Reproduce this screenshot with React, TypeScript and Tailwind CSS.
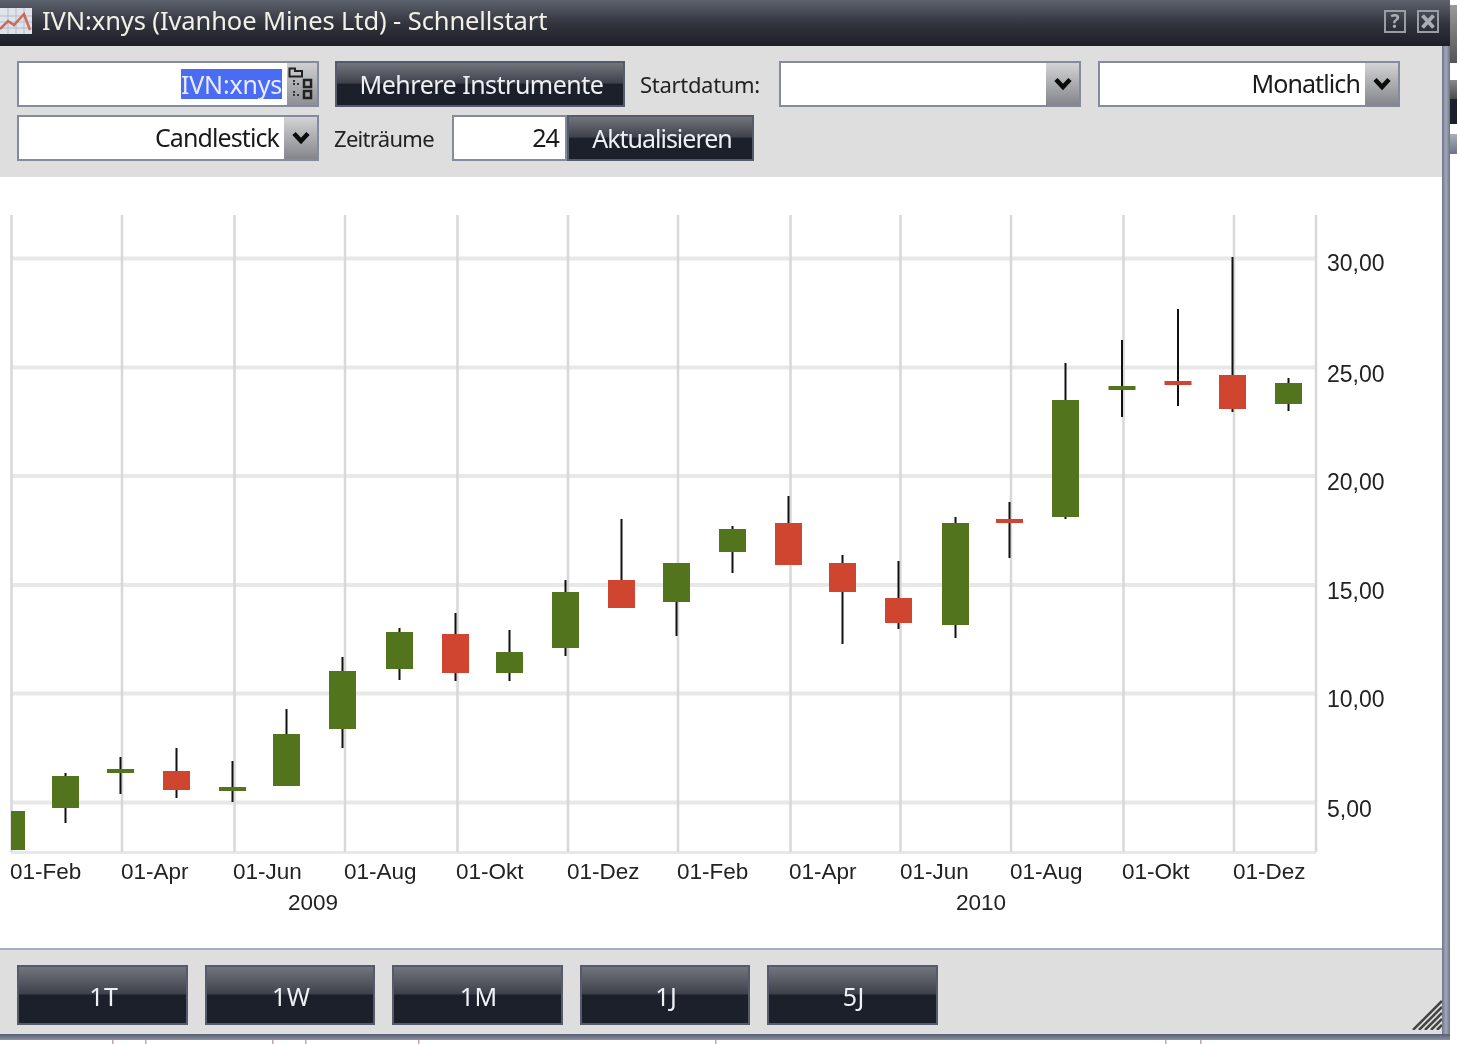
import React from 'react';

const GREEN = '#51741c';
const RED = '#cf4530';

// x, wick top, wick bottom, body top, body bottom, colour
const candles: [number, number, number, number, number, string][] = [
  [65.5, 773, 823, 776, 808, GREEN],
  [120.5, 757, 794, 769, 773, GREEN],
  [176.5, 748, 798, 771, 790, RED],
  [232.5, 761, 802, 787, 791, GREEN],
  [286.5, 709, 786, 734, 786, GREEN],
  [342.5, 657, 748, 671, 729, GREEN],
  [399.5, 628, 680, 632, 669, GREEN],
  [455.5, 613, 681, 634, 673, RED],
  [509.5, 630, 681, 652, 673, GREEN],
  [565.5, 580, 656, 592, 648, GREEN],
  [621.5, 519, 580, 580, 608, RED],
  [676.5, 563, 636, 563, 602, GREEN],
  [732.5, 526, 573, 529, 552, GREEN],
  [788.5, 496, 565, 523, 565, RED],
  [842.5, 555, 644, 563, 592, RED],
  [898.5, 561, 629, 598, 623, RED],
  [955.5, 517, 638, 523, 625, GREEN],
  [1009.5, 502, 558, 519, 523, RED],
  [1065.5, 363, 519, 400, 517, GREEN],
  [1122, 340, 417, 386, 390, GREEN],
  [1178, 309, 406, 381, 385, RED],
  [1232.5, 257, 412, 375, 409, RED],
  [1288.5, 378, 411, 383, 404, GREEN],
];

const gridX = [11.5, 122, 234.5, 345, 457.5, 568, 678, 790.5, 900.5, 1011, 1123.5, 1234, 1316];
const gridY = [258.5, 367.5, 476, 585, 693.5, 802.5];
const priceLabels: [string, number][] = [
  ['30,00', 263],
  ['25,00', 374],
  ['20,00', 482],
  ['15,00', 591],
  ['10,00', 699],
  ['5,00', 809],
];
const dateLabels: [string, number][] = [
  ['01-Feb', 10],
  ['01-Apr', 121],
  ['01-Jun', 233],
  ['01-Aug', 344],
  ['01-Okt', 456],
  ['01-Dez', 567],
  ['01-Feb', 677],
  ['01-Apr', 789],
  ['01-Jun', 900],
  ['01-Aug', 1010],
  ['01-Okt', 1122],
  ['01-Dez', 1233],
];
const bottomTicks = [112, 145, 272, 305, 418, 715, 1165, 1200];

const Chevron = () => (
  <svg width="20" height="16" viewBox="0 0 20 16" fill="none">
    <path d="M3 3.5 L10 11 L17 3.5" stroke="#0b0b0b" strokeWidth="4.5" />
  </svg>
);

const DropButton = () => (
  <div className="w-[33px] h-full flex items-center justify-center bg-gradient-to-b from-[#d4d4d6] to-[#84868c]">
    <Chevron />
  </div>
);

const Field = ({ width, pad, text, selected, children }: { width: string; pad: string; text?: string; selected?: boolean; children?: React.ReactNode }) => (
  <div className={`${width} h-[46px] flex border-2 border-[#848b9c] bg-white`}>
    <div className={`${pad} flex-1 flex items-center justify-end text-[25px] text-[#1a1a1a] tracking-[-0.9px] overflow-hidden`}>
      {selected ? <span className="bg-[#4a6cf2] text-[#e8ecff] leading-[30px] tracking-[-0.2px]">{text}</span> : text}
    </div>
    {children}
  </div>
);

const DarkButton = ({ label, className }: { label: string; className: string }) => (
  <button className={`${className} flex items-center justify-center border-2 border-[#555b6b] text-[#eef0f4] bg-[linear-gradient(#73757d_0%,#3e414b_48%,#1c202b_50%,#1c202b_100%)]`}>
    {label}
  </button>
);

const PeriodButton = ({ label }: { label: string }) => (
  <DarkButton label={label} className="w-[170.5px] h-[60px] pt-[4px] pl-[3px] text-[25px] tracking-[0.5px]" />
);

const Chart = () => (
  <svg width="1442" height="771" viewBox="0 177 1442 771" className="block">
    {gridY.map((y) => (
      <rect key={y} x="11" y={y - 2} width="1305" height="4" fill="#e8e8e8" />
    ))}
    <rect x="11" y="851" width="1305" height="3" fill="#e8e8e8" />
    {gridX.map((x) => (
      <rect key={x} x={x - 1.25} y="215" width="2.5" height="637" fill="#d8d8d8" />
    ))}
    <rect x="11" y="811" width="14" height="39" fill={GREEN} />
    {candles.map(([x, wickTop, wickBottom, top, bottom, color]) => (
      <g key={x}>
        <rect x={x - 1} y={wickTop} width="2" height={wickBottom - wickTop} fill="#111" />
        <rect x={x - 13.5} y={top} width="27" height={bottom - top} fill={color} />
      </g>
    ))}
    <g fontFamily="'Liberation Sans', sans-serif" fontSize="23" fill="#222">
      {priceLabels.map(([label, y]) => (
        <text key={label} x="1327" y={y + 8}>{label}</text>
      ))}
    </g>
    <g fontFamily="'Liberation Sans', sans-serif" fontSize="22.5" fill="#222">
      {dateLabels.map(([label, x]) => (
        <text key={x} x={x} y="879">{label}</text>
      ))}
      <text x="288" y="910">2009</text>
      <text x="956" y="910">2010</text>
    </g>
  </svg>
);

export default function App() {
  return (
    <div className="w-[1457px] h-[1044px] bg-white overflow-hidden blur-[0.4px] font-['Noto_Sans',sans-serif]">
      <div className="flex h-[1040px]">
        <div className="w-[1450px] h-full flex flex-col">
          {/* title bar */}
          <div className="h-[46px] shrink-0 flex items-center pb-[4px] pr-[11px] bg-gradient-to-b from-[#5f636f] via-[#33363f] to-[#1c1f28]">
            <svg width="32" height="26" viewBox="0 0 32 26" className="shrink-0">
              <rect width="32" height="26" fill="#dfe3ea" />
              <path d="M0 8H32M0 14H32M0 20H32M8 0V26M16 0V26M24 0V26" stroke="#b5bbc8" strokeWidth="1" />
              <path d="M0 21 L8 13 L14 17 L24 6 L30 22" fill="none" stroke="#c96a5a" strokeWidth="2.5" />
            </svg>
            <span className="ml-[10px] mb-[1px] text-[25.5px] text-[#f2f0e8] tracking-[-0.1px]">IVN:xnys (Ivanhoe Mines Ltd) - Schnellstart</span>
            <div className="ml-auto flex gap-[11px] items-center">
              <div className="w-[22px] h-[23px] border-2 border-[#9a9da6] flex items-center justify-center text-[#a9acb4] text-[19px] font-bold leading-none">?</div>
              <div className="w-[22px] h-[23px] border-2 border-[#9a9da6] flex items-center justify-center">
                <svg width="16" height="17" viewBox="0 0 16 17">
                  <path d="M2.5 2.5L13.5 14.5M13.5 2.5L2.5 14.5" stroke="#a9acb4" strokeWidth="4" />
                </svg>
              </div>
            </div>
          </div>

          <div className="flex-1 flex min-h-0">
            <div className="w-[1442px] flex flex-col">
              {/* toolbar */}
              <div className="h-[131px] shrink-0 bg-[#dedede] pt-[15px] pl-[17px] flex flex-col gap-[8px]">
                <div className="flex items-center">
                  <Field width="w-[302px]" pad="pr-[5px]" text="IVN:xnys" selected>
                    <div className="w-[30px] h-full flex items-center justify-center bg-gradient-to-b from-[#d0d0d2] to-[#8e9096]">
                      <svg width="30" height="42" viewBox="0 0 30 42" fill="none">
                        <path d="M2.5 5.5H8V8H15V13.5H2.5Z" fill="#c4c4c4" stroke="#222" strokeWidth="2" />
                        <rect x="17" y="17" width="7" height="7" stroke="#222" strokeWidth="2.5" />
                        <rect x="17" y="28" width="7" height="7" stroke="#222" strokeWidth="2.5" />
                        <path d="M6 18H8M6 21H8M10 21H12M6 29H8M6 32H8M10 32H12" stroke="#333" strokeWidth="2" />
                      </svg>
                    </div>
                  </Field>
                  <DarkButton label="Mehrere Instrumente" className="ml-[16px] w-[290px] h-[46px] pt-[1px] pl-[3px] text-[25px] tracking-[-0.5px]" />
                  <span className="ml-[15px] w-[139px] text-[22px] text-[#222] tracking-[-0.3px]">Startdatum:</span>
                  <Field width="w-[302px]" pad="pr-[4px]"><DropButton /></Field>
                  <div className="w-[17px]" />
                  <Field width="w-[302px]" pad="pr-[5px]" text="Monatlich"><DropButton /></Field>
                </div>
                <div className="flex items-center">
                  <Field width="w-[302px]" pad="pr-[5px]" text="Candlestick"><DropButton /></Field>
                  <span className="ml-[15px] w-[118px] text-[22px] text-[#222] tracking-[-0.7px]">Zeiträume</span>
                  <Field width="w-[115px]" pad="pr-[6px]" text="24" />
                  <DarkButton label="Aktualisieren" className="w-[187px] h-[46px] pt-[1px] pl-[3px] text-[25px] tracking-[-1px]" />
                </div>
              </div>

              {/* chart */}
              <div className="flex-1 bg-white overflow-hidden">
                <Chart />
              </div>

              {/* period buttons */}
              <div className="relative h-[86px] shrink-0 bg-[#dedede] border-t-2 border-[#a7adbc] pt-[15px] pl-[17px] flex gap-[17px]">
                <PeriodButton label="1T" />
                <PeriodButton label="1W" />
                <PeriodButton label="1M" />
                <PeriodButton label="1J" />
                <PeriodButton label="5J" />
                <svg width="30" height="30" viewBox="0 0 30 30" className="absolute right-0 bottom-[4px]">
                  <path d="M1 30L30 1M7 30L30 7M13 30L30 13M19 30L30 19M25 30L30 25" stroke="#444" strokeWidth="2.5" />
                </svg>
              </div>
            </div>
            {/* window edge */}
            <div className="w-[8px] bg-[linear-gradient(90deg,#6d7488,#a3a9b8_50%,#6d7488)]" />
          </div>
          <div className="h-[6px] shrink-0 bg-[linear-gradient(#565e72,#8a90a0)]" />
        </div>

        {/* window behind, right edge */}
        <div className="w-[7px] flex flex-col pt-[5px]">
          <div className="h-[58px] bg-gradient-to-b from-[#9a9a9a] to-[#555]" />
          <div className="h-[19px] mt-[17px] bg-gradient-to-b from-[#8a8a8a] to-[#4a4a4a]" />
          <div className="h-[25px] bg-[#1c202b]" />
          <div className="h-[20px] mt-[10px] bg-gradient-to-b from-[#aab0bc] to-[#6d7488]" />
        </div>
      </div>

      {/* window behind, bottom edge */}
      <svg width="1457" height="4" className="block">
        {bottomTicks.map((x) => (
          <rect key={x} x={x} y="0" width="1.5" height="4" fill="#c9a6a0" />
        ))}
      </svg>
    </div>
  );
}
